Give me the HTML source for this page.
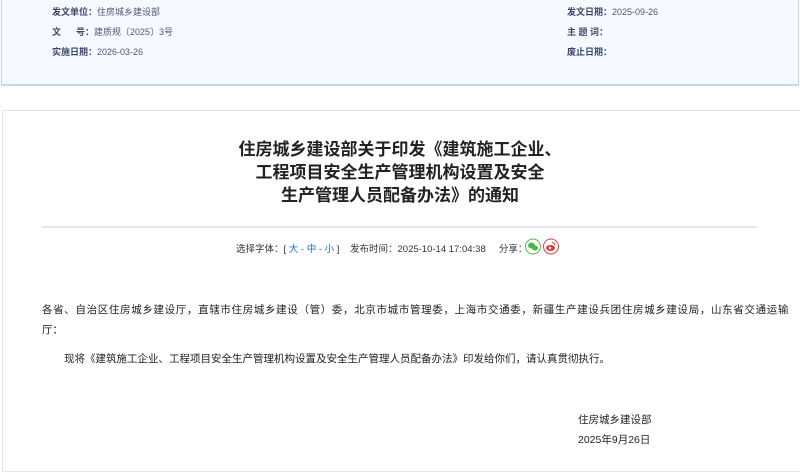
<!DOCTYPE html>
<html><head><meta charset="utf-8"><style>
body{margin:0;width:800px;height:450px;overflow:hidden;background:#fff;font-family:"Liberation Sans","Noto Sans CJK SC",sans-serif;position:relative}
.top{position:absolute;left:1px;top:-2px;width:796px;height:85px;background:#f6f9ff;border:1px solid #bcd3ec;border-bottom:2px solid #c4d9ef;}
.t{position:absolute;font-size:9px;color:#4a5a7a;white-space:nowrap}
.t b{color:#3a4868}
.main{position:absolute;left:2px;top:110px;width:800px;height:360px;border:1px solid #e2e2e2;border-right:none}
h1{position:absolute;left:0;width:800px;top:138px;margin:0;text-align:center;font-size:17px;line-height:23px;color:#222;font-weight:bold}
.hr{position:absolute;left:42px;top:226px;width:715px;height:2px;background:#e4e6ea}
.p{position:absolute;font-size:10.5px;color:#222;white-space:nowrap}
</style></head><body>
<div class="top"></div>
<div class="t" style="left:52px;top:5px"><b>发文单位：</b>住房城乡建设部</div>
<div class="t" style="left:52px;top:25px"><b>文&nbsp;&nbsp;&nbsp;&nbsp;&nbsp;&nbsp;号：</b>建质规〔2025〕3号</div>
<div class="t" style="left:52px;top:45px"><b>实施日期：</b>2026-03-26</div>
<div class="t" style="left:567px;top:5px"><b>发文日期：</b>2025-09-26</div>
<div class="t" style="left:567px;top:25px"><b>主&nbsp;题&nbsp;词：</b></div>
<div class="t" style="left:567px;top:45px"><b>废止日期：</b></div>
<div class="main"></div>
<h1>住房城乡建设部关于印发《建筑施工企业、<br>工程项目安全生产管理机构设置及安全<br>生产管理人员配备办法》的通知</h1>
<div class="hr"></div>
<div class="p" style="left:236px;top:241px;font-size:9.5px;color:#333">选择字体：[ <span style="color:#1a6fc9">大 - 中 - 小</span> ]&nbsp;&nbsp;&nbsp;&nbsp;发布时间：2025-10-14 17:04:38&nbsp;&nbsp;&nbsp;&nbsp;&nbsp;分享：</div>
<svg style="position:absolute;left:525px;top:238px" width="36" height="18"><circle cx="8" cy="8.5" r="7.5" fill="#fff" stroke="#4cb34c"/><ellipse cx="6.5" cy="7.5" rx="3.5" ry="3" fill="#4cb34c"/><ellipse cx="10" cy="10" rx="3" ry="2.5" fill="#4cb34c"/><circle cx="26" cy="8.5" r="7.5" fill="#fff" stroke="#e0393e"/><ellipse cx="25.5" cy="10" rx="4.5" ry="3" fill="#e0393e"/><circle cx="25" cy="10" r="1.2" fill="#fff"/><path d="M27 4.5a3 3 0 0 1 3 3" stroke="#e0393e" fill="none"/></svg>
<div class="p" style="left:42px;top:302px;letter-spacing:0.65px">各省、自治区住房城乡建设厅，直辖市住房城乡建设（管）委，北京市城市管理委，上海市交通委，新疆生产建设兵团住房城乡建设局，山东省交通运输</div>
<div class="p" style="left:42px;top:322px">厅：</div>
<div class="p" style="left:64px;top:351px">现将《建筑施工企业、工程项目安全生产管理机构设置及安全生产管理人员配备办法》印发给你们，请认真贯彻执行。</div>
<div class="p" style="left:578px;top:412px">住房城乡建设部</div>
<div class="p" style="left:578px;top:432px">2025年9月26日</div>
</body></html>
